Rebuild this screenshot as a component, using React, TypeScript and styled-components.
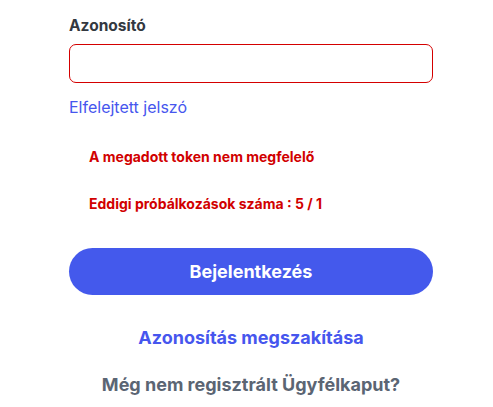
import React from "react";
import styled, { createGlobalStyle } from "styled-components";

const Global = createGlobalStyle`
  html, body { margin: 0; padding: 0; background: #ffffff; }
  body { font-family: Inter, "Noto Sans", sans-serif; }
`;

const Page = styled.div`
  width: 493px;
  height: 407px;
  overflow: hidden;
  box-sizing: border-box;
  padding: 0 60px 0 69px;
`;

const Form = styled.div`
  width: 364px;
  display: flex;
  flex-direction: column;
`;

const Label = styled.label`
  margin-top: 16px;
  font-size: 15.5px;
  font-weight: 700;
  line-height: 20px;
  color: #333840;
`;

const Input = styled.input`
  margin-top: 8px;
  box-sizing: border-box;
  width: 100%;
  height: 39px;
  border: 1px solid #d40000;
  border-radius: 7px;
  outline: none;
  padding: 0 12px;
  font-family: inherit;
  font-size: 15px;
`;

const ForgotLink = styled.a`
  margin-top: 13px;
  font-size: 16px;
  line-height: 22px;
  color: #4656ee;
  text-decoration: none;
`;

const ErrorText = styled.div<{ $gap: number }>`
  margin-top: ${(p) => p.$gap}px;
  padding-left: 20px;
  font-size: 14px;
  font-weight: 700;
  line-height: 20px;
  color: #d10000;
`;

const PrimaryButton = styled.button`
  margin-top: 34px;
  height: 47px;
  width: 100%;
  border: none;
  border-radius: 24px;
  background: #4459ec;
  color: #ffffff;
  font-family: inherit;
  font-size: 18px;
  font-weight: 700;
`;

const CenterLink = styled.div<{ $color: string; $gap: number }>`
  margin-top: ${(p) => p.$gap}px;
  text-align: center;
  font-size: 18px;
  font-weight: 700;
  line-height: 24px;
  color: ${(p) => p.$color};
`;

export default function App() {
  return (
    <>
      <Global />
      <Page>
        <Form>
          <Label>Azonosító</Label>
          <Input />
          <ForgotLink href="#">Elfelejtett jelszó</ForgotLink>
          <ErrorText $gap={29}>A megadott token nem megfelelő</ErrorText>
          <ErrorText $gap={27}>Eddigi próbálkozások száma : 5 / 1</ErrorText>
          <PrimaryButton>Bejelentkezés</PrimaryButton>
          <CenterLink $color="#4656ee" $gap={31}>Azonosítás megszakítása</CenterLink>
          <CenterLink $color="#5b6573" $gap={23}>Még nem regisztrált Ügyfélkaput?</CenterLink>
        </Form>
      </Page>
    </>
  );
}
